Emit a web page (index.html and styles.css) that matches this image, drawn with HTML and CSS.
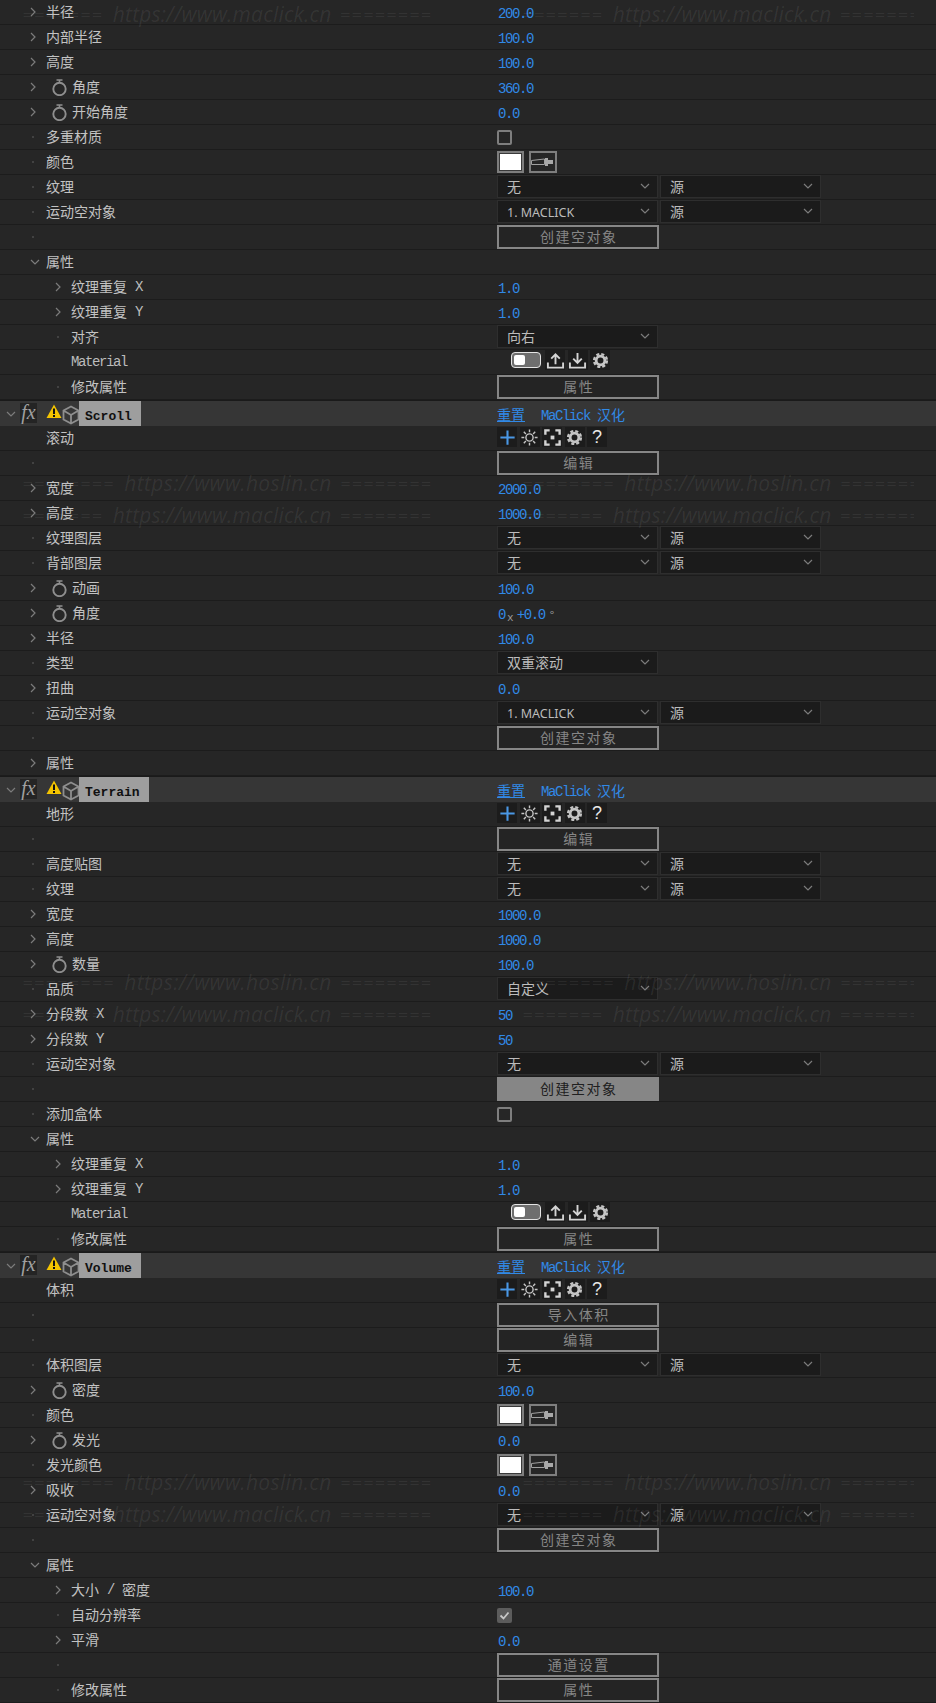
FILE: index.html
```html
<!DOCTYPE html>
<html lang="zh">
<head>
<meta charset="utf-8">
<title>Effect Controls</title>
<link rel="stylesheet" href="styles.css">
</head>
<body>
<svg class="defs" width="0" height="0">
  <symbol id="cr" viewBox="0 0 6 10"><path d="M1 1l4 4-4 4" fill="none" stroke="#7c7c7c" stroke-width="1.2"/></symbol>
  <symbol id="cd" viewBox="0 0 10 6"><path d="M1 1l4 4 4-4" fill="none" stroke="#7c7c7c" stroke-width="1.2"/></symbol>
  <symbol id="sw" viewBox="0 0 15 17"><circle cx="7.5" cy="10" r="6.2" fill="none" stroke="#8e8e8e" stroke-width="1.9"/><path d="M4.5 1h6M7.5 1v3" fill="none" stroke="#8e8e8e" stroke-width="1.6"/></symbol>
  <symbol id="drop" viewBox="0 0 24 14"><path d="M.5 5.500l13-1.500v5.500H.5z" fill="none" stroke="#a0a0a0" stroke-width="1"/><path d="M14 3h3v8h-3zM17 5h5v4h-5z" fill="#a8a8a8"/></symbol>
  <symbol id="up" viewBox="0 0 20 20"><path d="M10 14V3.500M5.500 8L10 3.500 14.500 8M2 12v5.500h16V12" fill="none" stroke="#d4d4d4" stroke-width="2"/></symbol>
  <symbol id="down" viewBox="0 0 20 20"><path d="M10 2v10.500M5.500 8l4.500 4.500L14.500 8M2 12v5.500h16V12" fill="none" stroke="#d4d4d4" stroke-width="2"/></symbol>
  <symbol id="gear" viewBox="0 0 20 20"><circle cx="10" cy="10" r="4.600" fill="none" stroke="#c4c4c4" stroke-width="3"/><circle cx="10" cy="10" r="6.800" fill="none" stroke="#c4c4c4" stroke-width="2.400" stroke-dasharray="3.200 2.140"/></symbol>
  <symbol id="plus" viewBox="0 0 20 20"><path d="M10 2.500v15M2.500 10h15" fill="none" stroke="#4a98e6" stroke-width="2.200"/></symbol>
  <symbol id="sun" viewBox="0 0 20 20"><circle cx="10" cy="10" r="3.800" fill="none" stroke="#c4c4c4" stroke-width="1.500"/><path d="M10 1.500v3M10 15.500v3M1.500 10h3M15.500 10h3M4 4l2.200 2.200M13.800 13.800L16 16M16 4l-2.200 2.200M6.200 13.800L4 16" fill="none" stroke="#c4c4c4" stroke-width="1.500"/></symbol>
  <symbol id="focus" viewBox="0 0 20 20"><path d="M7 2.500H2.500V7M13 2.500h4.500V7M7 17.500H2.500V13M13 17.500h4.500V13" fill="none" stroke="#d4d4d4" stroke-width="2.500"/><rect x="8" y="8" width="4" height="4" fill="#d4d4d4"/></symbol>
  <symbol id="warn" viewBox="0 0 16 15"><path d="M8 .5L15.500 14H.5z" fill="#f4c400"/><path d="M7 4.500h2v5.500H7zM7 11h2v2H7z" fill="#111"/></symbol>
  <symbol id="cube" viewBox="0 0 18 20"><path d="M9 1.500l7.500 4v9L9 18.500l-7.500-4v-9zM1.500 5.500L9 10l7.500-4.500M9 10v8.500" fill="none" stroke="#8e8e8e" stroke-width="1.800"/></symbol>
</svg>

<main class="panel">
  <div class="row"><div class="lbl"><span class="tw"><svg class="cr"><use href="#cr"/></svg></span>半径</div><div class="ctl"><span class="val">200.0</span></div></div>
  <div class="row"><div class="lbl"><span class="tw"><svg class="cr"><use href="#cr"/></svg></span>内部半径</div><div class="ctl"><span class="val">100.0</span></div></div>
  <div class="row"><div class="lbl"><span class="tw"><svg class="cr"><use href="#cr"/></svg></span>高度</div><div class="ctl"><span class="val">100.0</span></div></div>
  <div class="row"><div class="lbl"><span class="tw"><svg class="cr"><use href="#cr"/></svg></span><svg class="sw"><use href="#sw"/></svg>角度</div><div class="ctl"><span class="val">360.0</span></div></div>
  <div class="row"><div class="lbl"><span class="tw"><svg class="cr"><use href="#cr"/></svg></span><svg class="sw"><use href="#sw"/></svg>开始角度</div><div class="ctl"><span class="val">0.0</span></div></div>
  <div class="row"><div class="lbl"><span class="tw"><i class="dot"></i></span>多重材质</div><div class="ctl"><span class="check"></span></div></div>
  <div class="row"><div class="lbl"><span class="tw"><i class="dot"></i></span>颜色</div><div class="ctl swrow"><span class="swatch"></span><span class="dropper"><svg class="drop"><use href="#drop"/></svg></span></div></div>
  <div class="row"><div class="lbl"><span class="tw"><i class="dot"></i></span>纹理</div><div class="ctl sels"><div class="sel">无<svg class="car"><use href="#cd"/></svg></div><div class="sel">源<svg class="car"><use href="#cd"/></svg></div></div></div>
  <div class="row"><div class="lbl"><span class="tw"><i class="dot"></i></span>运动空对象</div><div class="ctl sels"><div class="sel lay">1. MACLICK<svg class="car"><use href="#cd"/></svg></div><div class="sel">源<svg class="car"><use href="#cd"/></svg></div></div></div>
  <div class="row"><div class="lbl"><span class="tw"><i class="dot"></i></span></div><div class="ctl"><div class="btn">创建空对象</div></div></div>
  <div class="row"><div class="lbl"><span class="tw"><svg class="cdn"><use href="#cd"/></svg></span>属性</div><div class="ctl"></div></div>
  <div class="row"><div class="lbl sub"><span class="tw"><svg class="cr"><use href="#cr"/></svg></span>纹理重复<span class="m tag">X</span></div><div class="ctl"><span class="val">1.0</span></div></div>
  <div class="row"><div class="lbl sub"><span class="tw"><svg class="cr"><use href="#cr"/></svg></span>纹理重复<span class="m tag">Y</span></div><div class="ctl"><span class="val">1.0</span></div></div>
  <div class="row"><div class="lbl sub"><span class="tw"><i class="dot"></i></span>对齐</div><div class="ctl sels"><div class="sel">向右<svg class="car"><use href="#cd"/></svg></div></div></div>
  <div class="row"><div class="lbl sub"><span class="tw"></span><span class="m">Material</span></div><div class="ctl mat"><span class="toggle"><i></i></span><span class="ib"><svg><use href="#up"/></svg></span><span class="ib"><svg><use href="#down"/></svg></span><span class="ib"><svg><use href="#gear"/></svg></span></div></div>
  <div class="row"><div class="lbl sub"><span class="tw"><i class="dot"></i></span>修改属性</div><div class="ctl"><div class="btn">属性</div></div></div>

  <div class="head"><div class="hl"><svg class="hc"><use href="#cd"/></svg><span class="fx">fx</span><svg class="warn"><use href="#warn"/></svg><svg class="cube"><use href="#cube"/></svg><span class="badge">Scroll</span></div><div class="hr"><a class="reset">重置</a><span class="mb">MaClick</span><span>汉化</span></div></div>
  <div class="row"><div class="lbl"><span class="tw"></span>滚动</div><div class="ctl tools"><span class="ib"><svg><use href="#plus"/></svg></span><span class="ib"><svg><use href="#sun"/></svg></span><span class="ib"><svg><use href="#focus"/></svg></span><span class="ib"><svg><use href="#gear"/></svg></span><span class="ib q">?</span></div></div>
  <div class="row"><div class="lbl"><span class="tw"><i class="dot"></i></span></div><div class="ctl"><div class="btn">编辑</div></div></div>
  <div class="row"><div class="lbl"><span class="tw"><svg class="cr"><use href="#cr"/></svg></span>宽度</div><div class="ctl"><span class="val">2000.0</span></div></div>
  <div class="row"><div class="lbl"><span class="tw"><svg class="cr"><use href="#cr"/></svg></span>高度</div><div class="ctl"><span class="val">1000.0</span></div></div>
  <div class="row"><div class="lbl"><span class="tw"><i class="dot"></i></span>纹理图层</div><div class="ctl sels"><div class="sel">无<svg class="car"><use href="#cd"/></svg></div><div class="sel">源<svg class="car"><use href="#cd"/></svg></div></div></div>
  <div class="row"><div class="lbl"><span class="tw"><i class="dot"></i></span>背部图层</div><div class="ctl sels"><div class="sel">无<svg class="car"><use href="#cd"/></svg></div><div class="sel">源<svg class="car"><use href="#cd"/></svg></div></div></div>
  <div class="row"><div class="lbl"><span class="tw"><svg class="cr"><use href="#cr"/></svg></span><svg class="sw"><use href="#sw"/></svg>动画</div><div class="ctl"><span class="val">100.0</span></div></div>
  <div class="row"><div class="lbl"><span class="tw"><svg class="cr"><use href="#cr"/></svg></span><svg class="sw"><use href="#sw"/></svg>角度</div><div class="ctl"><span class="val">0</span><span class="times">x</span><span class="val plus">+0.0</span><span class="deg">°</span></div></div>
  <div class="row"><div class="lbl"><span class="tw"><svg class="cr"><use href="#cr"/></svg></span>半径</div><div class="ctl"><span class="val">100.0</span></div></div>
  <div class="row"><div class="lbl"><span class="tw"><i class="dot"></i></span>类型</div><div class="ctl sels"><div class="sel">双重滚动<svg class="car"><use href="#cd"/></svg></div></div></div>
  <div class="row"><div class="lbl"><span class="tw"><svg class="cr"><use href="#cr"/></svg></span>扭曲</div><div class="ctl"><span class="val">0.0</span></div></div>
  <div class="row"><div class="lbl"><span class="tw"><i class="dot"></i></span>运动空对象</div><div class="ctl sels"><div class="sel lay">1. MACLICK<svg class="car"><use href="#cd"/></svg></div><div class="sel">源<svg class="car"><use href="#cd"/></svg></div></div></div>
  <div class="row"><div class="lbl"><span class="tw"><i class="dot"></i></span></div><div class="ctl"><div class="btn">创建空对象</div></div></div>
  <div class="row"><div class="lbl"><span class="tw"><svg class="cr"><use href="#cr"/></svg></span>属性</div><div class="ctl"></div></div>

  <div class="head"><div class="hl"><svg class="hc"><use href="#cd"/></svg><span class="fx">fx</span><svg class="warn"><use href="#warn"/></svg><svg class="cube"><use href="#cube"/></svg><span class="badge">Terrain</span></div><div class="hr"><a class="reset">重置</a><span class="mb">MaClick</span><span>汉化</span></div></div>
  <div class="row"><div class="lbl"><span class="tw"></span>地形</div><div class="ctl tools"><span class="ib"><svg><use href="#plus"/></svg></span><span class="ib"><svg><use href="#sun"/></svg></span><span class="ib"><svg><use href="#focus"/></svg></span><span class="ib"><svg><use href="#gear"/></svg></span><span class="ib q">?</span></div></div>
  <div class="row"><div class="lbl"><span class="tw"><i class="dot"></i></span></div><div class="ctl"><div class="btn">编辑</div></div></div>
  <div class="row"><div class="lbl"><span class="tw"><i class="dot"></i></span>高度贴图</div><div class="ctl sels"><div class="sel">无<svg class="car"><use href="#cd"/></svg></div><div class="sel">源<svg class="car"><use href="#cd"/></svg></div></div></div>
  <div class="row"><div class="lbl"><span class="tw"><i class="dot"></i></span>纹理</div><div class="ctl sels"><div class="sel">无<svg class="car"><use href="#cd"/></svg></div><div class="sel">源<svg class="car"><use href="#cd"/></svg></div></div></div>
  <div class="row"><div class="lbl"><span class="tw"><svg class="cr"><use href="#cr"/></svg></span>宽度</div><div class="ctl"><span class="val">1000.0</span></div></div>
  <div class="row"><div class="lbl"><span class="tw"><svg class="cr"><use href="#cr"/></svg></span>高度</div><div class="ctl"><span class="val">1000.0</span></div></div>
  <div class="row"><div class="lbl"><span class="tw"><svg class="cr"><use href="#cr"/></svg></span><svg class="sw"><use href="#sw"/></svg>数量</div><div class="ctl"><span class="val">100.0</span></div></div>
  <div class="row"><div class="lbl"><span class="tw"><i class="dot"></i></span>品质</div><div class="ctl sels"><div class="sel">自定义<svg class="car"><use href="#cd"/></svg></div></div></div>
  <div class="row"><div class="lbl"><span class="tw"><svg class="cr"><use href="#cr"/></svg></span>分段数<span class="m tag">X</span></div><div class="ctl"><span class="val">50</span></div></div>
  <div class="row"><div class="lbl"><span class="tw"><svg class="cr"><use href="#cr"/></svg></span>分段数<span class="m tag">Y</span></div><div class="ctl"><span class="val">50</span></div></div>
  <div class="row"><div class="lbl"><span class="tw"><i class="dot"></i></span>运动空对象</div><div class="ctl sels"><div class="sel">无<svg class="car"><use href="#cd"/></svg></div><div class="sel">源<svg class="car"><use href="#cd"/></svg></div></div></div>
  <div class="row"><div class="lbl"><span class="tw"><i class="dot"></i></span></div><div class="ctl"><div class="btn on">创建空对象</div></div></div>
  <div class="row"><div class="lbl"><span class="tw"><i class="dot"></i></span>添加盒体</div><div class="ctl"><span class="check"></span></div></div>
  <div class="row"><div class="lbl"><span class="tw"><svg class="cdn"><use href="#cd"/></svg></span>属性</div><div class="ctl"></div></div>
  <div class="row"><div class="lbl sub"><span class="tw"><svg class="cr"><use href="#cr"/></svg></span>纹理重复<span class="m tag">X</span></div><div class="ctl"><span class="val">1.0</span></div></div>
  <div class="row"><div class="lbl sub"><span class="tw"><svg class="cr"><use href="#cr"/></svg></span>纹理重复<span class="m tag">Y</span></div><div class="ctl"><span class="val">1.0</span></div></div>
  <div class="row"><div class="lbl sub"><span class="tw"></span><span class="m">Material</span></div><div class="ctl mat"><span class="toggle"><i></i></span><span class="ib"><svg><use href="#up"/></svg></span><span class="ib"><svg><use href="#down"/></svg></span><span class="ib"><svg><use href="#gear"/></svg></span></div></div>
  <div class="row"><div class="lbl sub"><span class="tw"><i class="dot"></i></span>修改属性</div><div class="ctl"><div class="btn">属性</div></div></div>

  <div class="head"><div class="hl"><svg class="hc"><use href="#cd"/></svg><span class="fx">fx</span><svg class="warn"><use href="#warn"/></svg><svg class="cube"><use href="#cube"/></svg><span class="badge">Volume</span></div><div class="hr"><a class="reset">重置</a><span class="mb">MaClick</span><span>汉化</span></div></div>
  <div class="row"><div class="lbl"><span class="tw"></span>体积</div><div class="ctl tools"><span class="ib"><svg><use href="#plus"/></svg></span><span class="ib"><svg><use href="#sun"/></svg></span><span class="ib"><svg><use href="#focus"/></svg></span><span class="ib"><svg><use href="#gear"/></svg></span><span class="ib q">?</span></div></div>
  <div class="row"><div class="lbl"><span class="tw"><i class="dot"></i></span></div><div class="ctl"><div class="btn">导入体积</div></div></div>
  <div class="row"><div class="lbl"><span class="tw"><i class="dot"></i></span></div><div class="ctl"><div class="btn">编辑</div></div></div>
  <div class="row"><div class="lbl"><span class="tw"><i class="dot"></i></span>体积图层</div><div class="ctl sels"><div class="sel">无<svg class="car"><use href="#cd"/></svg></div><div class="sel">源<svg class="car"><use href="#cd"/></svg></div></div></div>
  <div class="row"><div class="lbl"><span class="tw"><svg class="cr"><use href="#cr"/></svg></span><svg class="sw"><use href="#sw"/></svg>密度</div><div class="ctl"><span class="val">100.0</span></div></div>
  <div class="row"><div class="lbl"><span class="tw"><i class="dot"></i></span>颜色</div><div class="ctl swrow"><span class="swatch"></span><span class="dropper"><svg class="drop"><use href="#drop"/></svg></span></div></div>
  <div class="row"><div class="lbl"><span class="tw"><svg class="cr"><use href="#cr"/></svg></span><svg class="sw"><use href="#sw"/></svg>发光</div><div class="ctl"><span class="val">0.0</span></div></div>
  <div class="row"><div class="lbl"><span class="tw"><i class="dot"></i></span>发光颜色</div><div class="ctl swrow"><span class="swatch"></span><span class="dropper"><svg class="drop"><use href="#drop"/></svg></span></div></div>
  <div class="row"><div class="lbl"><span class="tw"><svg class="cr"><use href="#cr"/></svg></span>吸收</div><div class="ctl"><span class="val">0.0</span></div></div>
  <div class="row"><div class="lbl"><span class="tw"><i class="dot"></i></span>运动空对象</div><div class="ctl sels"><div class="sel">无<svg class="car"><use href="#cd"/></svg></div><div class="sel">源<svg class="car"><use href="#cd"/></svg></div></div></div>
  <div class="row"><div class="lbl"><span class="tw"><i class="dot"></i></span></div><div class="ctl"><div class="btn">创建空对象</div></div></div>
  <div class="row"><div class="lbl"><span class="tw"><svg class="cdn"><use href="#cd"/></svg></span>属性</div><div class="ctl"></div></div>
  <div class="row"><div class="lbl sub"><span class="tw"><svg class="cr"><use href="#cr"/></svg></span>大小<span class="m slash">/</span>密度</div><div class="ctl"><span class="val">100.0</span></div></div>
  <div class="row"><div class="lbl sub"><span class="tw"><i class="dot"></i></span>自动分辨率</div><div class="ctl"><span class="check checked"><svg viewBox="0 0 15 15"><path d="M3.500 7.500l3 3 5-6" fill="none" stroke="#c8c8c8" stroke-width="1.800"/></svg></span></div></div>
  <div class="row"><div class="lbl sub"><span class="tw"><svg class="cr"><use href="#cr"/></svg></span>平滑</div><div class="ctl"><span class="val">0.0</span></div></div>
  <div class="row"><div class="lbl sub"><span class="tw"><i class="dot"></i></span></div><div class="ctl"><div class="btn">通道设置</div></div></div>
  <div class="row"><div class="lbl sub"><span class="tw"><i class="dot"></i></span>修改属性</div><div class="ctl"><div class="btn">属性</div></div></div>
</main>

<div class="marks" aria-hidden="true">
  <div class="wm w1 mc"><div class="copy"><span class="eq">=======</span><span class="url">https://www.maclick.cn</span><span class="eq">========</span></div><div class="copy"><span class="eq">=======</span><span class="url">https://www.maclick.cn</span><span class="eq">========</span></div></div>
  <div class="wm w2 hs"><div class="copy"><span class="eq">========</span><span class="url">https://www.hoslin.cn</span><span class="eq">========</span></div><div class="copy"><span class="eq">========</span><span class="url">https://www.hoslin.cn</span><span class="eq">========</span></div></div>
  <div class="wm w3 mc"><div class="copy"><span class="eq">=======</span><span class="url">https://www.maclick.cn</span><span class="eq">========</span></div><div class="copy"><span class="eq">=======</span><span class="url">https://www.maclick.cn</span><span class="eq">========</span></div></div>
  <div class="wm w4 hs"><div class="copy"><span class="eq">========</span><span class="url">https://www.hoslin.cn</span><span class="eq">========</span></div><div class="copy"><span class="eq">========</span><span class="url">https://www.hoslin.cn</span><span class="eq">========</span></div></div>
  <div class="wm w5 mc"><div class="copy"><span class="eq">=======</span><span class="url">https://www.maclick.cn</span><span class="eq">========</span></div><div class="copy"><span class="eq">=======</span><span class="url">https://www.maclick.cn</span><span class="eq">========</span></div></div>
  <div class="wm w6 hs"><div class="copy"><span class="eq">========</span><span class="url">https://www.hoslin.cn</span><span class="eq">========</span></div><div class="copy"><span class="eq">========</span><span class="url">https://www.hoslin.cn</span><span class="eq">========</span></div></div>
  <div class="wm w7 mc"><div class="copy"><span class="eq">=======</span><span class="url">https://www.maclick.cn</span><span class="eq">========</span></div><div class="copy"><span class="eq">=======</span><span class="url">https://www.maclick.cn</span><span class="eq">========</span></div></div>
</div>
</body>
</html>
```
FILE: styles.css
```css
* { box-sizing: border-box; }
html, body { margin: 0; padding: 0; background: #262626; }
body {
  position: relative;
  width: 936px;
  height: 1703px;
  overflow: hidden;
  font-family: "Noto Sans CJK SC", "Liberation Sans", sans-serif;
  font-size: 14px;
  color: #c2c2c2;
}
.defs { position: absolute; }
.panel { display: flex; flex-direction: column; width: 936px; }

.row {
  display: grid;
  grid-template-columns: 497px 1fr;
  grid-template-rows: 24px;
  height: 25px;
  border-bottom: 1px solid #1c1c1c;
  background: #262626;
}
.lbl {
  display: flex;
  align-items: flex-start;
  padding-left: 30px;
  white-space: pre;
  line-height: 22px;
}
.lbl.sub { padding-left: 55px; }
.tw { display: flex; align-items: center; width: 16px; height: 24px; flex: none; }
.cr { width: 6px; height: 10px; }
.cdn { width: 10px; height: 6px; }
.dot { display: block; width: 2px; height: 2px; margin-left: 2px; background: #424242; }
.sw { width: 15px; height: 17px; margin: 4px 5px 0 6px; flex: none; }
.m {
  font-family: "Liberation Mono", monospace;
  font-size: 14px;
  letter-spacing: -1.4px;
  color: #bcbcbc;
  margin-top: 1px;
}
.tag { margin: 1px 0 0 8px; }
.slash { margin: 1px 8px 0; }

.ctl { display: flex; align-items: center; position: relative; }
.val {
  font-family: "Liberation Mono", monospace;
  font-size: 14px;
  letter-spacing: -1.4px;
  color: #3189e6;
  padding: 3px 1px 0 1px;
}
.plus { padding-left: 0; }
.times {
  font-family: "Liberation Mono", monospace;
  font-size: 11px;
  color: #9a9a9a;
  margin: 9px 3px 0 1px;
}
.deg { font-size: 12px; color: #9a9a9a; margin: 2px 0 0 4px; }

.check {
  display: block;
  width: 15px;
  height: 15px;
  border: 2px solid #7e7e7e;
  border-radius: 2px;
  background: #262626;
}
.check.checked { border: 0; background: #5c5c5c; }
.check svg { display: block; width: 15px; height: 15px; }

.swrow { gap: 5px; align-items: flex-start; padding-top: 1px; }
.swatch {
  display: block;
  width: 27px;
  height: 22px;
  border: 2px solid #7e7e7e;
  background: #fff;
  box-shadow: inset 0 0 0 1px #3a3a3a;
}
.dropper {
  display: flex;
  align-items: center;
  justify-content: center;
  width: 28px;
  height: 22px;
  border: 2px solid #7e7e7e;
  background: #262626;
}
.drop { width: 24px; height: 14px; }

.sels { gap: 2px; align-items: flex-start; }
.sel {
  position: relative;
  width: 161px;
  height: 23px;
  padding-left: 9px;
  line-height: 20px;
  background: #1b1b1b;
  border: 1px solid #2e2e2e;
  color: #bcbcbc;
}
.lay { font-family: "Noto Sans", "Liberation Sans", sans-serif; font-size: 12.5px; line-height: 24px; }
.car { position: absolute; right: 7px; top: 7px; width: 10px; height: 6px; }

.btn {
  width: 162px;
  height: 24px;
  align-self: flex-start;
  padding-left: 1.5px;
  border: 2px solid #868686;
  background: #242424;
  color: #868686;
  text-align: center;
  line-height: 19px;
  letter-spacing: 1.5px;
}
.btn.on { background: #868686; color: #202020; }

.mat { gap: 2.5px; align-items: flex-start; padding-left: 14px; }
.toggle {
  display: flex;
  width: 30px;
  height: 16px;
  margin: 2px 1.5px 0 0;
  padding: 2px;
  border: 1px solid #e4e4e4;
  border-radius: 4px;
  background: #6e6e6e;
}
.toggle i { display: block; width: 11px; background: #fff; border-radius: 2px; }
.ib {
  display: flex;
  align-items: center;
  justify-content: center;
  width: 20px;
  height: 20px;
  background: #1c1c1c;
}
.ib svg { width: 19px; height: 19px; }
.tools { gap: 2.5px; align-items: flex-start; padding-top: 1px; }
.q { font-family: "Liberation Sans", sans-serif; font-size: 18px; color: #e8e8e8; }

.head {
  display: grid;
  grid-template-columns: 497px 1fr;
  height: 26px;
  border-top: 1px solid #1a1a1a;
  background: #363636;
}
.hl { display: flex; align-items: flex-start; padding-left: 6px; }
.hc { width: 10px; height: 6px; margin: 10px 4px 0 0; }
.fx {
  width: 17px;
  height: 20px;
  margin-top: 2px;
  background: #242424;
  font-family: "Liberation Serif", serif;
  font-style: italic;
  font-size: 20px;
  line-height: 19px;
  color: #a0a0a0;
  text-align: center;
}
.warn { width: 16px; height: 15px; margin: 3px 0 0 9px; }
.cube { width: 18px; height: 20px; margin: 4px -1px 0 0; }
.badge {
  height: 25px;
  padding: 7px 9px 0 6px;
  background: #9e9e9e;
  font-family: "Liberation Mono", monospace;
  font-size: 13px;
  font-weight: 700;
  line-height: 17px;
  color: #111;
}
.hr { display: flex; align-items: center; color: #3189e6; }
.reset { text-decoration: underline; text-underline-offset: 1px; width: 44px; }
.mb {
  width: 56px;
  margin-top: 4px;
  font-family: "Liberation Mono", monospace;
  font-size: 14px;
  letter-spacing: -1.4px;
}

.marks {
  position: absolute;
  left: 0;
  top: 0;
  width: 914px;
  height: 1703px;
  overflow: hidden;
  pointer-events: none;
}
.wm { position: absolute; left: 23px; display: flex; height: 30px; align-items: center; white-space: nowrap; color: rgba(255, 255, 255, .075); }
.copy { display: flex; align-items: center; width: 500px; flex: none; }
.eq {
  font-family: "DejaVu Sans Mono", monospace;
  font-size: 16px;
  letter-spacing: 1.9px;
}
.url {
  font-family: "Open Sans", sans-serif;
  font-style: italic;
  font-size: 21px;
  margin: 0 9px;
}
.mc .url { letter-spacing: .2px; }
.hs .url { letter-spacing: .35px; }
.w1 { top: -1px; }
.w2 { top: 468px; }
.w3 { top: 500px; }
.w4 { top: 967px; }
.w5 { top: 999px; }
.w6 { top: 1467px; }
.w7 { top: 1499px; }
```
